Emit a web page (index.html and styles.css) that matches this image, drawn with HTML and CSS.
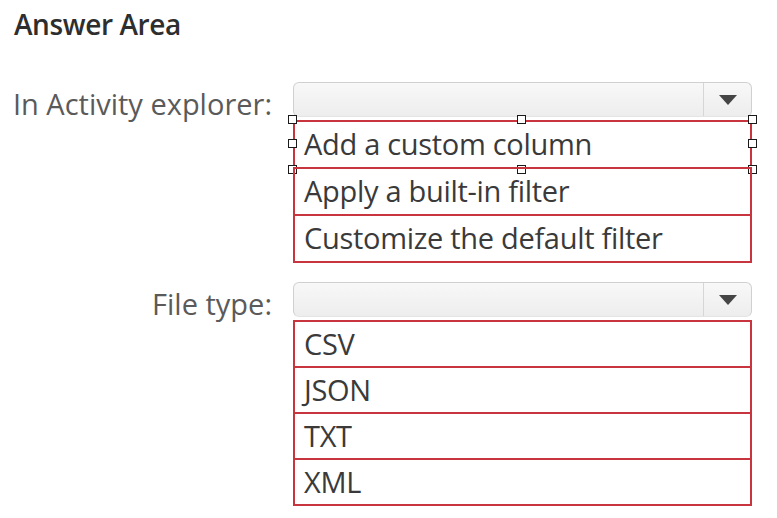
FILE: index.html
```html
<!DOCTYPE html>
<html>
<head>
<meta charset="utf-8">
<link rel="stylesheet" href="styles.css">
</head>
<body>
<div class="page">
  <h1 class="title">Answer Area</h1>
  <div class="field first">
    <div class="label">In Activity explorer:</div>
    <div class="control">
      <div class="combo">
        <div class="combo-value"></div>
        <div class="combo-btn"><span class="arrow"></span></div>
      </div>
      <div class="list">
        <div class="opt selected">Add a custom column
          <span class="h h-tl"></span><span class="h h-tc"></span><span class="h h-tr"></span>
          <span class="h h-ml"></span><span class="h h-mr"></span>
          <span class="h h-bl"></span><span class="h h-bc"></span><span class="h h-br"></span>
        </div>
        <div class="opt">Apply a built-in filter</div>
        <div class="opt">Customize the default filter</div>
      </div>
    </div>
  </div>
  <div class="field second">
    <div class="label">File type:</div>
    <div class="control">
      <div class="combo">
        <div class="combo-value"></div>
        <div class="combo-btn"><span class="arrow"></span></div>
      </div>
      <div class="list short">
        <div class="opt">CSV</div>
        <div class="opt">JSON</div>
        <div class="opt">TXT</div>
        <div class="opt">XML</div>
      </div>
    </div>
  </div>
</div>
</body>
</html>
```
FILE: styles.css
```css
html, body {
  margin: 0;
  padding: 0;
  background: #ffffff;
}
body {
  width: 777px;
  height: 518px;
  overflow: hidden;
  font-family: "Open Sans", "Noto Sans", sans-serif;
}
.page {
  display: flex;
  flex-direction: column;
}
.title {
  margin: 0;
  padding: 5px 0 0 14px;
  height: 82px;
  box-sizing: border-box;
  font-size: 28px;
  font-weight: 600;
  color: #2e2e2e;
  letter-spacing: -0.4px;
}
.field {
  display: grid;
  grid-template-columns: 272px 459px;
  column-gap: 21px;
}
.second {
  margin-top: 19px;
}
.label {
  text-align: right;
  font-size: 29px;
  color: #5a5a5a;
  padding-top: 4px;
  line-height: 36px;
  letter-spacing: 0;
  white-space: nowrap;
}
.combo {
  height: 35px;
  box-sizing: border-box;
  border: 1px solid #d0d0d0;
  border-bottom-color: #e4e4e4;
  border-radius: 6px;
  background: linear-gradient(#f8f8f8, #ededed);
  display: flex;
}
.combo-value {
  flex: 1;
}
.combo-btn {
  width: 47px;
  border-left: 1px solid #d6d6d6;
  display: flex;
  align-items: center;
  justify-content: center;
}
.arrow {
  width: 0;
  height: 0;
  border-left: 9px solid transparent;
  border-right: 9px solid transparent;
  border-top: 10px solid #454545;
}
.list {
  margin-top: 3px;
  display: flex;
  flex-direction: column;
}
.opt {
  position: relative;
  height: 49px;
  box-sizing: border-box;
  border: 2px solid #c8353f;
  padding: 0 0 0 9px;
  font-size: 29px;
  line-height: 44px;
  color: #3a3a3a;
  letter-spacing: -0.3px;
  white-space: nowrap;
}
.opt + .opt {
  margin-top: -2px;
}
.short .opt {
  height: 48px;
}
.h {
  position: absolute;
  width: 7px;
  height: 7px;
  background: #fff;
  border: 1.5px solid #1a1a1a;
}
.h-tl { left: -7px; top: -7px; }
.h-tc { left: calc(50% - 6px); top: -7px; }
.h-tr { right: -7px; top: -7px; }
.h-ml { left: -7px; top: calc(50% - 6px); }
.h-mr { right: -7px; top: calc(50% - 6px); }
.h-bl { left: -7px; bottom: -7px; }
.h-bc { left: calc(50% - 6px); bottom: -7px; }
.h-br { right: -7px; bottom: -7px; }
```
